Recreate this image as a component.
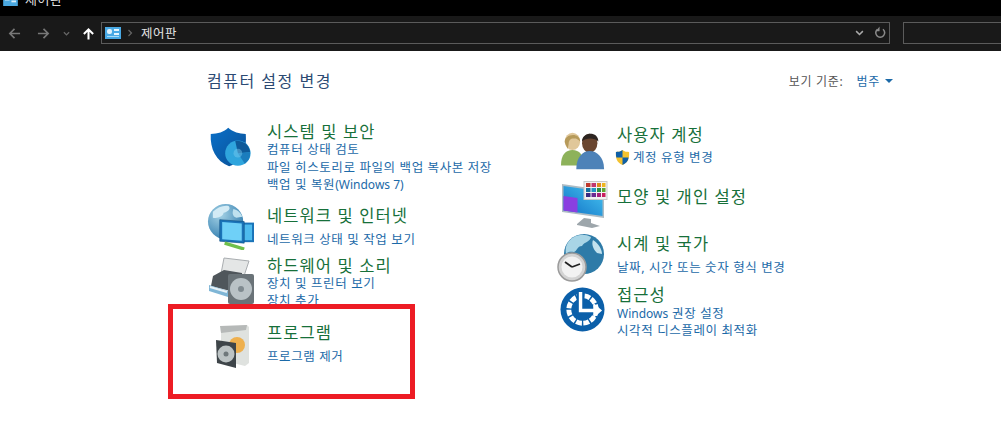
<div class="page">
  <div class="titlebar">
    <svg class="tb-icon" viewBox="0 0 16 12"><rect x="0" y="0" width="16" height="12" fill="#4aa8e0"/><rect x="2" y="2" width="5" height="4" fill="#d8eefa"/><rect x="9" y="2" width="5" height="2" fill="#d8eefa"/><rect x="9" y="6" width="5" height="2" fill="#d8eefa"/></svg>
    <span>제어판</span>
  </div>
  <div class="toolbar">
    <div class="nav">
      <svg class="ar" viewBox="0 0 14 14"><path d="M13 7H2M7 2 2 7l5 5" fill="none" stroke="#777" stroke-width="1.8"/></svg>
      <svg class="ar fwd" viewBox="0 0 14 14"><path d="M1 7h11M7 2l5 5-5 5" fill="none" stroke="#777" stroke-width="1.8"/></svg>
      <svg class="dd" viewBox="0 0 8 6"><path d="M1 1l3 3 3-3" fill="none" stroke="#666" stroke-width="1.5"/></svg>
      <svg class="up" viewBox="0 0 14 14"><path d="M7 13V2M2 7l5-5 5 5" fill="none" stroke="#fff" stroke-width="2.2"/></svg>
    </div>
    <div class="address">
      <svg class="addr-icon" viewBox="0 0 16 12"><rect width="16" height="12" fill="#49a9e4"/><rect x="2" y="2" width="5" height="5" rx="2" fill="#dff1fb"/><rect x="9" y="2" width="5" height="2" fill="#e6f5fd"/><rect x="9" y="6" width="5" height="2" fill="#e6f5fd"/><rect x="2" y="9" width="12" height="1" fill="#a7dcf7"/></svg>
      <svg class="sep" viewBox="0 0 6 8"><path d="M1.5 1l3 3-3 3" fill="none" stroke="#666" stroke-width="1.2"/></svg>
      <span class="crumb">제어판</span>
      <svg class="addr-dd" viewBox="0 0 12 8"><path d="M1.500 1.500 6 6l4.500-4.500" fill="none" stroke="#aaa" stroke-width="2"/></svg>
      <svg class="refresh" viewBox="0 0 14 14"><path d="M4 3.200a5.200 5.200 0 1 0 6.500 0" fill="none" stroke="#8a8a8a" stroke-width="1.800"/><path d="M6.500 0v5.500H2z" fill="#8a8a8a"/></svg>
    </div>
    <div class="search"></div>
  </div>

  <main class="content">
    <div class="head">
      <h1>컴퓨터 설정 변경</h1>
      <div class="view">
        <span class="view-label">보기 기준:</span>
        <span class="view-value">범주</span>
        <span class="caret"></span>
      </div>
    </div>

    <div class="cols">
      <div class="col">
        <section class="item i1">
          <svg class="icon" viewBox="0 0 48 48">
            <defs>
              <linearGradient id="sh" x1="0" y1="0" x2="1" y2="1"><stop offset="0" stop-color="#0a70c8"/><stop offset="1" stop-color="#0a4f95"/></linearGradient>
            </defs>
            <path d="M22 2c5 5 13 7 20 7 1 14-1 30-19 37C8 40 1 26 2 9c8 0 15-2 20-7z" fill="url(#sh)"/>
            <circle cx="33" cy="31" r="14.500" fill="#2fa5dd"/>
            <path d="M33 31 30 17a14.500 14.500 0 0 1 17 13z" fill="#0e5a99"/>
            <path d="M33 31l14-1a14.500 14.500 0 0 1-6 13z" fill="#1b7dbd"/>
            <circle cx="33" cy="31" r="5" fill="#7ccdf0" opacity=".45"/>
          </svg>
          <div class="text">
            <h2>시스템 및 보안</h2>
            <a href="#a">컴퓨터 상태 검토</a>
            <a href="#a">파일 히스토리로 파일의 백업 복사본 저장</a>
            <a href="#a">백업 및 복원<span class="lat">(Windows 7)</span></a>
          </div>
        </section>

        <section class="item i2">
          <svg class="icon" viewBox="0 0 48 48">
            <defs>
              <radialGradient id="gl" cx=".35" cy=".3" r=".8"><stop offset="0" stop-color="#a6d3e6"/><stop offset="1" stop-color="#2c79ac"/></radialGradient>
            </defs>
            <circle cx="19" cy="19" r="18" fill="url(#gl)"/>
            <path d="M6 9c5-5 11-7 16-6 3 3-1 6-5 7-1 4-6 6-11 5z" fill="#d3ebf5"/>
            <path d="M27 6c4 1 8 4 9 8l-6 1c-3-1-5-4-3-9z" fill="#bfe1ef"/>
            <path d="M36 20h12v20H36z" fill="#1a73b8"/>
            <path d="M38 22h8v16h-8z" fill="#4dbbee"/>
            <path d="M13 17l25 2v22l-25-2z" fill="#1a73b8" stroke="#0f4e80" stroke-width=".6"/>
            <path d="M15.500 19.500l20 1.500v17.500l-20-1.500z" fill="#6fd0f7"/>
            <path d="M18 41l20 6" stroke="#6fbf4b" stroke-width="3.500"/>
          </svg>
          <div class="text">
            <h2>네트워크 및 인터넷</h2>
            <a href="#a">네트워크 상태 및 작업 보기</a>
          </div>
        </section>

        <section class="item i3">
          <svg class="icon" viewBox="0 0 48 48">
            <path d="M16 2l25 3-6 18H12z" fill="#e4e6e6" stroke="#a9adb0"/>
            <path d="M5 20l11-6 18 3v21L3 30z" fill="#4f565b"/>
            <path d="M1 29l19 6v6L1 35z" fill="#7fb6d6"/>
            <path d="M2 31l17 5" stroke="#e8f2f8" stroke-width="2"/>
            <rect x="20" y="18" width="26" height="30" rx="2" fill="#6a7378"/>
            <circle cx="33" cy="33" r="11" fill="#b9c2c6"/>
            <circle cx="33" cy="33" r="3" fill="#7f8a90"/>
          </svg>
          <div class="text">
            <h2>하드웨어 및 소리</h2>
            <a href="#a">장치 및 프린터 보기</a>
            <a href="#a">장치 추가</a>
          </div>
        </section>

        <section class="item i4">
          <svg class="icon small" viewBox="0 0 36 44">
            <path d="M6 4 32 1l2 2v36l-4 3L6 36z" fill="#dfe2df"/>
            <path d="M5 2l27-1-1 5L6 9z" fill="#b6b9b8"/>
            <circle cx="22" cy="21" r="8" fill="#eeb04e"/>
            <path d="M1 16l20 3v25L2 39z" fill="#3e4549"/>
            <circle cx="11" cy="30" r="8.500" fill="#bcc3c4"/>
            <circle cx="11" cy="30" r="2.500" fill="#6f787b"/>
          </svg>
          <div class="text">
            <h2>프로그램</h2>
            <a href="#a">프로그램 제거</a>
          </div>
        </section>
      </div>

      <div class="col">
        <section class="item r1">
          <svg class="icon wide" viewBox="0 0 48 40">
            <ellipse cx="13" cy="10" rx="8" ry="9" fill="#e0c79a"/>
            <path d="M5 11c-1-9 16-11 16-1-3-3-5-3-7-3-3 0-5 2-5 6l-1 5z" fill="#b69a5a"/>
            <path d="M1 35c0-11 5-16 12-16 7 0 12 5 12 16z" fill="#8db25a"/>
            <ellipse cx="31" cy="12" rx="8" ry="10" fill="#6a4630"/>
            <path d="M23 10c0-10 17-11 17 0-4-4-13-4-17 0z" fill="#2d2521"/>
            <path d="M17 39c0-13 7-19 14-19s15 6 15 19z" fill="#4d82b8"/>
          </svg>
          <div class="text">
            <h2>사용자 계정</h2>
            <div class="uac">
              <svg viewBox="0 0 16 16"><path d="M8 0c2 2 5 2 7 2 .5 7-1 11-7 14C2 13 .5 9 1 2c2 0 5 0 7-2z" fill="#f3c22f"/><path d="M8 0c-2 2-5 2-7 2 0 3 0 4 .5 6H8zM8 8v8c4-2 6-4 6.500-8z" fill="#0e5fa8"/></svg>
              <a href="#a">계정 유형 변경</a>
            </div>
          </div>
        </section>

        <section class="item r2">
          <svg class="icon wide" viewBox="0 0 48 48">
            <defs>
              <linearGradient id="sc" x1="0" y1="1" x2="1" y2="0"><stop offset="0" stop-color="#0f6fc4"/><stop offset="1" stop-color="#48c6f2"/></linearGradient>
            </defs>
            <path d="M2 3l42 6v28L2 31z" fill="#aebcc4"/>
            <path d="M3.500 5l39 5.500v24.500L3.500 29.500z" fill="url(#sc)"/>
            <path d="M3.500 15l14 2v14.500l-14-2z" fill="#8a3fe0"/>
            <path d="M17 43l7-6 7 1v4l9 3-8 2-15-3z" fill="#9da6ab"/>
            <rect x="24" y="0.500" width="23" height="18" fill="#f2f2f2" stroke="#c8c8c8"/>
            <g>
              <rect x="26" y="2" width="4.500" height="4" fill="#c0392b"/><rect x="31.500" y="2" width="4.500" height="4" fill="#c2376f"/><rect x="37" y="2" width="4" height="4" fill="#e08a1e"/><rect x="42" y="2" width="3.500" height="4" fill="#eeb51f"/>
              <rect x="26" y="7" width="4.500" height="4" fill="#15709f"/><rect x="31.500" y="7" width="4.500" height="4" fill="#2196c4"/><rect x="37" y="7" width="4" height="4" fill="#2c8f46"/><rect x="42" y="7" width="3.500" height="4" fill="#5da832"/>
              <rect x="26" y="12" width="4.500" height="4" fill="#3a2a80"/><rect x="31.500" y="12" width="4.500" height="4" fill="#6b2a90"/><rect x="37" y="12" width="4" height="4" fill="#a8207c"/><rect x="42" y="12" width="3.500" height="4" fill="#c91f5d"/>
            </g>
          </svg>
          <div class="text">
            <h2>모양 및 개인 설정</h2>
          </div>
        </section>

        <section class="item r3">
          <svg class="icon wide" viewBox="0 0 48 48">
            <circle cx="27" cy="20" r="20" fill="#2e7ba8"/>
            <path d="M12 7c6-7 15-8 22-4-1 5-7 5-9 9-5 0-5 5-8 6-3 0-5-1-8 2-1-5 0-9 3-13z" fill="#a9d5e6"/>
            <path d="M36 6c5 3 9 9 9 14l-5-1c-3-3-6-8-4-13z" fill="#c3e2ee"/>
            <circle cx="15" cy="33" r="14" fill="#d3d3d3" stroke="#9b9b9b" stroke-width="1.500"/>
            <circle cx="15" cy="33" r="10.500" fill="#f2f2f2"/>
            <path d="M15 33 8 28M15 33l8-3" stroke="#222" stroke-width="1.800" fill="none"/>
          </svg>
          <div class="text">
            <h2>시계 및 국가</h2>
            <a href="#a">날짜, 시간 또는 숫자 형식 변경</a>
          </div>
        </section>

        <section class="item r4">
          <svg class="icon wide" viewBox="0 0 46 46">
            <circle cx="23" cy="23" r="22.500" fill="#0b5fa9"/>
            <circle cx="23" cy="23" r="14" fill="none" stroke="#fff" stroke-width="5" stroke-dasharray="6 1.500"/>
            <circle cx="23" cy="23" r="9" fill="#0b5fa9"/>
            <path d="M21 5v19h15" fill="none" stroke="#0b5fa9" stroke-width="8"/>
            <path d="M21 5v19h15" fill="none" stroke="#fff" stroke-width="3.500"/>
            <path d="M34 16l9 8-9 8z" fill="#fff"/>
          </svg>
          <div class="text">
            <h2>접근성</h2>
            <a href="#a"><span class="lat">Windows</span> 권장 설정</a>
            <a href="#a">시각적 디스플레이 최적화</a>
          </div>
        </section>
      </div>
    </div>
  </main>

  <div class="highlight"></div>
</div>

<style>
  :global(body) { margin: 0; background: #fff; }
  .page {
    position: relative;
    width: 1001px;
    height: 423px;
    overflow: hidden;
    background: #fff;
    font-family: "Noto Sans", "Noto Sans CJK KR", sans-serif;
  }
  .titlebar {
    height: 16px;
    background: #000;
    color: #ddd;
    display: flex;
    align-items: flex-start;
    gap: 7px;
    padding-left: 3px;
    font-size: 13px;
    letter-spacing: 0.5px;
    overflow: hidden;
  }
  .titlebar span { line-height: 20px; margin-top: -11px; }
  .tb-icon { width: 15px; height: 11px; margin-top: -5px; flex: none; }

  .toolbar {
    height: 35px;
    background: #191919;
    display: flex;
    align-items: center;
    box-sizing: border-box;
  }
  .nav { width: 101px; display: flex; align-items: center; flex: none; }
  .ar { width: 13px; height: 13px; margin-left: 8px; }
  .fwd { margin-left: 16px; }
  .dd { width: 7px; height: 6px; margin-left: 13px; }
  .up { width: 13px; height: 14px; margin-left: 12px; }
  .address {
    width: 789px;
    height: 22px;
    box-sizing: border-box;
    border: 1px solid #5b5b5b;
    display: flex;
    align-items: center;
    padding-left: 3px;
    flex: none;
    margin-top: -2px;
  }
  .addr-icon { width: 16px; height: 12px; }
  .sep { width: 6px; height: 8px; margin-left: 6px; }
  .crumb { color: #e4e4e4; font-size: 12.5px; letter-spacing: 0.5px; margin-left: 8px; }
  .addr-dd { width: 9px; height: 6px; margin-left: auto; }
  .refresh { width: 12px; height: 13px; margin-left: 10px; margin-right: 3px; }
  .search {
    width: 110px;
    height: 22px;
    margin-left: 13px;
    border: 1px solid #5b5b5b;
    box-sizing: border-box;
    margin-top: -2px;
    flex: none;
  }

  .content { padding-left: 207px; }
  .head {
    display: flex;
    align-items: center;
    height: 24px;
    margin-top: 18px;
    width: 686px;
  }
  h1 {
    margin: 0;
    font-size: 16px;
    letter-spacing: 1.500px;
    font-weight: 400;
    color: #2c4a73;
    line-height: 24px;
  }
  .view { margin-left: auto; display: flex; align-items: center; font-size: 12px; letter-spacing: 0.7px; }
  .view-label { color: #555; }
  .view-value { color: #1c6aa8; margin-left: 13px; }
  .caret {
    width: 0; height: 0;
    margin-left: 5px;
    border-left: 4px solid transparent;
    border-right: 4px solid transparent;
    border-top: 4px solid #1c6aa8;
  }

  .cols { display: grid; grid-template-columns: 350px 1fr; }
  .col { display: flex; flex-direction: column; }
  .item { display: grid; grid-template-columns: 60px 1fr; }
  .icon { width: 42px; height: 44px; margin-left: 2px; }
  .text { display: flex; flex-direction: column; align-items: flex-start; }
  h2 {
    margin: 1px 0 0;
    font-size: 16.500px;
    letter-spacing: 1.100px;
    line-height: 18px;
    font-weight: 400;
    color: #17703a;
  }
  a {
    font-size: 12.500px;
    letter-spacing: 0.6px;
    line-height: 17.500px;
    color: #1c6aa8;
    text-decoration: none;
    white-space: nowrap;
  }
  .lat { font-size: 12px; letter-spacing: 0; }

  .i1 { margin-top: 29px; height: 71px; }
  .i1 .icon { margin-top: 3px; }

  .i2 { margin-top: 13px; height: 50px; }
  .i2 a { margin-top: 6px; }
  .i2 .icon { height: 47px; width: 47px; margin-left: 0; margin-top: -3px; }

  .i3 { height: 67px; }
  .i3 a { line-height: 16.500px; }
  .i3 a:first-of-type { margin-top: 1px; }
  .i3 .icon { margin-top: 0; width: 48px; height: 48px; margin-left: 1px; }

  .i4 { height: 60px; }
  .i4 a { margin-top: 6px; }
  .icon.small { width: 36px; height: 44px; margin-left: 8px; margin-top: 1px; }

  .icon.wide { width: 48px; height: 48px; margin-left: 1px; }

  .r1 { margin-top: 32px; height: 49px; }
  .r1 .icon.wide { height: 40px; margin-top: 6px; margin-left: 3px; width: 46px; }
  .uac { display: flex; align-items: center; margin-top: 5px; margin-left: -2px; }
  .uac svg { width: 15px; height: 15px; margin-right: 3px; }

  .r2 { height: 51px; }
  .r2 .icon.wide { margin-top: 7px; margin-left: 3px; }
  .r2 .text { padding-top: 13px; }

  .r3 { height: 48px; }
  .r3 .text { padding-top: 9px; }
  .r3 a { margin-top: 6px; }
  .r3 .icon.wide { margin-top: 9px; margin-left: 0; }

  .r4 { margin-top: 3px; }
  .r4 .text { padding-top: 9px; }
  .r4 a { line-height: 17px; }
  .r4 a:first-of-type { margin-top: 1px; }
  .r4 .icon.wide { height: 45px; width: 45px; margin-left: 3px; margin-top: 11px; }

  .highlight {
    position: absolute;
    left: 168px;
    top: 304px;
    width: 247px;
    height: 95px;
    box-sizing: border-box;
    border: 5px solid #ed1c24;
  }
</style>
